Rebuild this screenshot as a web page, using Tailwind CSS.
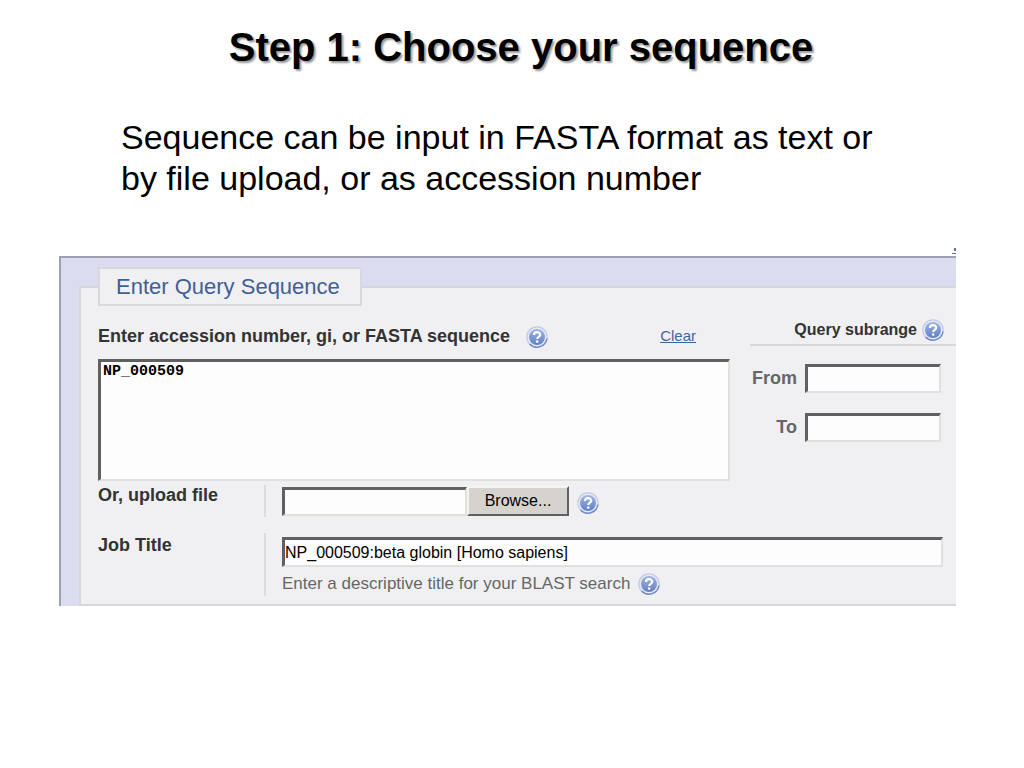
<!DOCTYPE html>
<html lang="en">
  <head>
    <meta charset="UTF-8" />
    <meta name="viewport" content="width=device-width, initial-scale=1.0" />
    <title>Step 1: Choose your sequence</title>
    <script src="https://cdn.jsdelivr.net/npm/@tailwindcss/browser@4"></script>
  </head>
  <body class="bg-white text-black font-['Liberation_Sans',Arial,sans-serif]">
    <!-- shared help icon -->
    <svg class="absolute size-0" aria-hidden="true">
      <defs>
        <linearGradient id="help-fill" x1="0" y1="0" x2="0" y2="1">
          <stop offset="0" stop-color="#a3b5e2" />
          <stop offset="1" stop-color="#6080c8" />
        </linearGradient>
        <symbol id="help" viewBox="0 0 22 22">
          <circle cx="11" cy="11" r="10.2" fill="#e6ebf7" stroke="#c0cbe6" stroke-width="1.2" />
          <path d="M3.6 18A10.2 10.2 0 0 0 21 12.5" fill="none" stroke="#7188c4" stroke-width="1.4" />
          <circle cx="11" cy="11" r="8" fill="url(#help-fill)" />
          <path d="M8 9C8 5.2 14.2 5.2 14.2 8.8C14.2 11 11.2 10.8 11.2 13" fill="none" stroke="#fff" stroke-width="2.2" />
          <circle cx="11.2" cy="15.6" r="1.3" fill="#fff" />
        </symbol>
      </defs>
    </svg>

    <main class="pt-[23px] pb-8">
      <h1 class="pl-[18px] text-center text-[40px] leading-[48px] font-bold text-shadow-[2px_2px_2px_rgb(0_0_0/0.4)]">Step 1: Choose your sequence</h1>
      <p class="mt-[46px] pl-[121px] pr-[120px] text-[34px] leading-[41px]">Sequence can be input in FASTA format as text or by file upload, or as accession number</p>

      <section class="mt-[49px] ml-[59px] mr-[68px]">
        <div class="flex h-2 justify-end overflow-hidden">
          <svg class="h-2 w-1" viewBox="0 0 4 8" aria-hidden="true">
            <path d="M2 0h2v3h-2zM0 5h4v1h-4z" fill="#5470a0" />
          </svg>
        </div>
        <form class="border-t-2 border-l-2 border-[#a0a0b0] bg-[#dcdcf0] pt-[9px] pl-[18px]">
          <fieldset class="border-y-2 border-l-2 border-[#d6d6de] bg-[#f0f0f2] pl-[17px]">
            <legend class="border-2 border-[#d8d8de] bg-[#f0f0f2] pr-5 pl-4 text-[22px] leading-[35px] text-[#3f5f96]">Enter Query Sequence</legend>

            <div class="flex gap-5">
              <div class="flex-1">
                <div class="flex h-[53px] items-center pt-2 pr-[34px]">
                  <label for="query" class="text-[18px] font-bold text-[#333]">Enter accession number, gi, or FASTA sequence</label>
                  <button type="button" aria-label="Help" class="ml-4"><svg class="size-[22px]"><use href="#help" /></svg></button>
                  <a href="#" class="ml-auto text-[15px] text-[#3f66a0] underline">Clear</a>
                </div>
                <textarea id="query" class="block h-[122px] w-full resize-none border-t-3 border-l-3 border-r-2 border-b-2 border-t-[#606060] border-l-[#606060] border-r-[#e0e0dc] border-b-[#e0e0dc] bg-[#fdfdfd] px-[2px] font-['Liberation_Mono',monospace] text-[15px] leading-5 font-bold">NP_000509</textarea>
              </div>
              <div class="w-[206px] text-[#666]">
                <div class="mb-[18px] flex h-10 items-center justify-end gap-[5px] border-b-2 border-[#d8d8dc] pt-[9px] pr-3">
                  <h2 class="text-[16px] font-bold text-[#333]">Query subrange</h2>
                  <button type="button" aria-label="Help"><svg class="size-[22px]"><use href="#help" /></svg></button>
                </div>
                <div class="mb-5 flex items-center justify-end gap-2 pr-[15px]">
                  <label for="from" class="text-[18px] font-bold">From</label>
                  <input id="from" type="text" class="h-[29px] w-[136px] border-t-3 border-l-3 border-r-2 border-b-2 border-t-[#606060] border-l-[#606060] border-r-[#e0e0dc] border-b-[#e0e0dc] bg-[#fdfdfd] text-[16px] text-black" />
                </div>
                <div class="flex items-center justify-end gap-2 pr-[15px]">
                  <label for="to" class="text-[18px] font-bold">To</label>
                  <input id="to" type="text" class="h-[29px] w-[136px] border-t-3 border-l-3 border-r-2 border-b-2 border-t-[#606060] border-l-[#606060] border-r-[#e0e0dc] border-b-[#e0e0dc] bg-[#fdfdfd] text-[16px] text-black" />
                </div>
              </div>
            </div>

            <div class="mt-1 flex h-8">
              <label for="file" class="w-[166px] text-[18px] leading-5 font-bold text-[#333]">Or, upload file</label>
              <div class="flex flex-1 items-center border-l-2 border-[#dcdce0] pl-4">
                <input id="file" type="text" class="h-[29px] w-[185px] border-t-3 border-l-3 border-r-2 border-b-2 border-t-[#606060] border-l-[#606060] border-r-[#e0e0dc] border-b-[#e0e0dc] bg-[#fdfdfd] text-[16px] text-black" />
                <button type="button" class="h-[30px] w-[102px] border-2 border-t-[#f4f4f0] border-l-[#f4f4f0] border-r-[#606060] border-b-[#606060] bg-[#d6d3ce] text-[16px] leading-none">Browse...</button>
                <button type="button" aria-label="Help" class="ml-2 pt-1"><svg class="size-[22px]"><use href="#help" /></svg></button>
              </div>
            </div>

            <div class="mt-4 mb-2 flex h-[63px]">
              <label for="title" class="w-[166px] text-[18px] leading-6 font-bold text-[#333]">Job Title</label>
              <div class="flex-1 border-l-2 border-[#dcdce0] pt-1 pr-[13px] pl-4">
                <input id="title" type="text" value="NP_000509:beta globin [Homo sapiens]" class="block h-[30px] w-full border-t-3 border-l-3 border-r-2 border-b-2 border-t-[#606060] border-l-[#606060] border-r-[#e0e0dc] border-b-[#e0e0dc] bg-[#fdfdfd] text-[16px] text-black" />
                <div class="mt-[5px] flex items-center gap-2 text-[#666]">
                  <span class="text-[17px] leading-6">Enter a descriptive title for your BLAST search</span>
                  <button type="button" aria-label="Help"><svg class="size-[22px]"><use href="#help" /></svg></button>
                </div>
              </div>
            </div>
          </fieldset>
        </form>
      </section>
    </main>
  </body>
</html>
